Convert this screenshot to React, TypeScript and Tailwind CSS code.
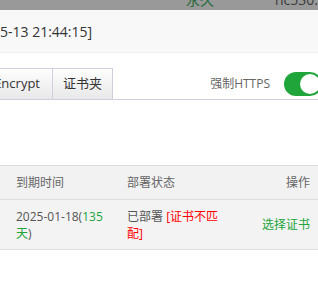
import React from 'react';

const font = { fontFamily: '"Open Sans", "Noto Sans CJK SC", sans-serif' };

export default function App() {
    return (
        <div className="w-[318px] h-[292px] overflow-hidden bg-white text-[#333]" style={font}>
            {/* dimmed page behind the dialog */}
            <div className="h-[10px] overflow-hidden bg-[#999]">
                <div className="flex mt-[-8px] text-[14px] leading-[16px] whitespace-nowrap">
                    <span className="ml-[186px] text-[#2a6b3b]">永久</span>
                    <span className="ml-[61px] text-[#3a3a3a]">hc530.com</span>
                </div>
            </div>

            {/* dialog title */}
            <div className="h-[43px] bg-[#f8f8f8] border-b border-[#eee] flex items-center">
                <span className="text-[14px] text-[#333] whitespace-nowrap">5-13 21:44:15]</span>
            </div>

            {/* tabs */}
            <div className="mt-[15px] flex items-center justify-between border-b border-[#cfcfdd] h-[32px]">
                <div className="w-[113px] shrink-0 flex justify-end self-end">
                    <span className="shrink-0 h-[31px] flex items-center px-[12px] text-[13px] text-[#333] whitespace-nowrap border border-b-0 border-[#cfcfdd] bg-linear-to-b from-[#fefefe] to-[#e8e8e8]">
                        Let's Encrypt
                    </span>
                    <span className="shrink-0 h-[31px] flex items-center px-[10px] text-[13px] text-[#333] whitespace-nowrap border border-l-0 border-b-0 border-[#cfcfdd] bg-linear-to-b from-[#fefefe] to-[#e8e8e8]">
                        证书夹
                    </span>
                </div>
                <div className="flex items-center mr-[-4px]">
                    <span className="text-[12px] text-[#666] mr-[14px]">强制HTTPS</span>
                    <div className="w-[38px] h-[24px] rounded-full bg-[#20a53a] flex items-center justify-end p-[2px]">
                        <div className="w-[20px] h-[20px] rounded-full bg-white" />
                    </div>
                </div>
            </div>

            {/* table */}
            <div className="mt-[65px] border-t border-[#ddd] text-[12px]">
                <div className="flex items-center h-[34px] bg-[#f2f2f2] border-b border-[#ddd] text-[#666]">
                    <div className="w-[111px] pl-[16px]">到期时间</div>
                    <div className="w-[111px] pl-[16px]">部署状态</div>
                    <div className="flex-1 text-right pr-[8px]">操作</div>
                </div>
                <div className="flex items-center h-[50px] bg-[#f3f3f3] border-b border-[#ddd] text-[#555] leading-[17px]">
                    <div className="w-[111px] pl-[16px] pr-[2px]">
                        2025-01-18(<span className="text-[#20a53a]">135天</span>)
                    </div>
                    <div className="w-[112px] pl-[16px]">
                        已部署 <span className="text-[#ff0000]">[证书不匹配]</span>
                    </div>
                    <div className="flex-1 text-right pr-[8px] text-[#20a53a]">选择证书</div>
                </div>
            </div>
        </div>
    );
}
